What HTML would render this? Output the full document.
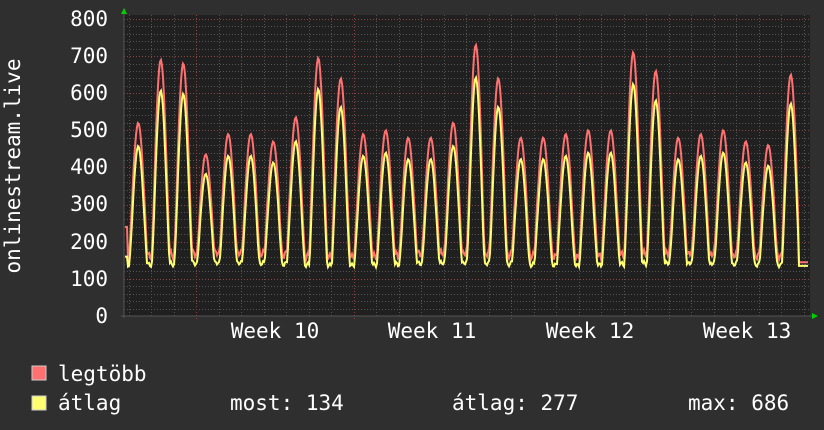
<!DOCTYPE html>
<html><head><meta charset="utf-8"><style>
html,body{margin:0;padding:0;background:#2f2f2f}
svg{display:block}
text{font-family:"DejaVu Sans Mono","Liberation Mono",monospace;fill:#fff;font-size:21px}
</style></head><body>
<svg id="s" width="824" height="430" xmlns="http://www.w3.org/2000/svg">
<rect width="824" height="430" fill="#2f2f2f"/>
<rect x="124" y="15" width="686" height="301" fill="#202020"/>
<g id="grid"></g>
<polyline id="mx" fill="none" stroke="#ff7070" stroke-width="2"/>
<polyline id="av" fill="none" stroke="#ffff70" stroke-width="2"/>
<line x1="124" y1="12" x2="124" y2="318" stroke="#555" stroke-width="1"/>
<line x1="121" y1="316" x2="812" y2="316" stroke="#555" stroke-width="1"/>
<polygon points="121,14 127,14 124,8" fill="#00d000"/>
<polygon points="812,313 812,319 818,316" fill="#00d000"/>
<g text-anchor="end">
<text x="108" y="26">800</text><text x="108" y="63">700</text><text x="108" y="100">600</text>
<text x="108" y="137">500</text><text x="108" y="174">400</text><text x="108" y="211">300</text>
<text x="108" y="249">200</text><text x="108" y="286">100</text><text x="108" y="323">0</text>
</g>
<text transform="translate(20,166) rotate(-90)" text-anchor="middle">onlinestream.live</text>
<g text-anchor="middle">
<text x="275" y="338">Week 10</text><text x="432" y="338">Week 11</text>
<text x="590" y="338">Week 12</text><text x="747" y="338">Week 13</text>
</g>
<rect x="32" y="366" width="14" height="14" fill="#ff7070" stroke="#ccc" stroke-width="1"/>
<rect x="32" y="396" width="14" height="14" fill="#ffff70" stroke="#ccc" stroke-width="1"/>
<text x="58" y="381">legtöbb</text>
<text x="58" y="410">átlag</text>
<text x="230" y="410">most: 134</text>
<text x="452" y="410">átlag: 277</text>
<text x="688" y="410">max: 686</text>
</svg>
<script>
var NS="http://www.w3.org/2000/svg",g=document.getElementById('grid');
function Y(v){return 316-v*0.3713;}
function ln(x1,y1,x2,y2,c){var l=document.createElementNS(NS,'line');l.setAttribute('x1',x1);l.setAttribute('y1',y1);l.setAttribute('x2',x2);l.setAttribute('y2',y2);l.setAttribute('stroke',c);l.setAttribute('stroke-width',1);l.setAttribute('stroke-dasharray','1,2');g.appendChild(l);}
for(var v=20;v<=800;v+=20){var y=Math.round(Y(v))+.5;ln(124,y,810,y,v%100==0?'#8a4444':'#555');}
for(var x=128.5;x<810;x+=22.5){ln(Math.round(x)+.5,15,Math.round(x)+.5,316,'#555');}
for(var x=196;x<810;x+=157.5){ln(Math.round(x)+.5,15,Math.round(x)+.5,320,'#8a4444');}
var pk=[520,690,680,435,490,490,470,535,695,640,490,500,480,480,520,730,640,480,480,490,500,500,710,660,480,490,500,470,460,650];
var mx=[],av=[];
for(var x=125;x<=808;x++){
 var t=(x-127)/22.5,d=Math.floor(t),ph=t-d;
 var di=Math.max(0,Math.min(29,d));var P=pk[di];
 var s=Math.max(0,Math.cos((ph-0.5)*Math.PI*1.25));s=Math.pow(s,1.2);
 var n=Math.sin(x*1.7)*8+Math.sin(x*0.53)*6;
 var bm=165+n, ba=140+n*0.6;
 var vm=bm+(P-bm)*s, va=ba+(P*0.88-ba)*Math.pow(s,1.1);
 if(x<128){vm=240;va=160;}
 if(x>798){vm=145;va=135;}
 mx.push(x+','+Y(vm).toFixed(1));av.push(x+','+Y(va).toFixed(1));
}
document.getElementById('mx').setAttribute('points',mx.join(' '));
document.getElementById('av').setAttribute('points',av.join(' '));
</script>
</body></html>
